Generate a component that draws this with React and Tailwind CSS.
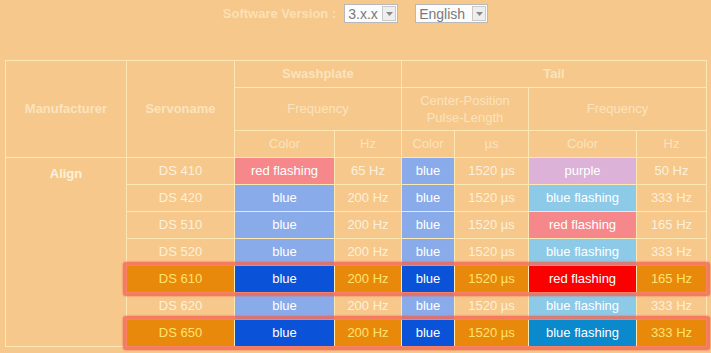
import React from 'react';

// cell colour classes, written out in full so Tailwind picks them up
const fills = {
  peach: 'bg-[#f6c88c] text-[#fdf0da]',
  lred: 'bg-[#f6878b] text-white',
  lblue: 'bg-[#8aabea] text-white',
  purple: 'bg-[#dcb2d8] text-white',
  sky: 'bg-[#8dcae8] text-white',
  hot: 'bg-[#e8890c] text-[#ffe46c]',
  dblue: 'bg-[#0a52d8] text-white',
  red: 'bg-[#fb0000] text-white',
  mblue: 'bg-[#0a89cd] text-white',
};

const rows = [
  { name: 'DS 410', sc: ['red flashing', 'lred'], hz: '65 Hz', tc: 'lblue', tf: ['purple', 'purple'], thz: '50 Hz' },
  { name: 'DS 420', sc: ['blue', 'lblue'], hz: '200 Hz', tc: 'lblue', tf: ['blue flashing', 'sky'], thz: '333 Hz' },
  { name: 'DS 510', sc: ['blue', 'lblue'], hz: '200 Hz', tc: 'lblue', tf: ['red flashing', 'lred'], thz: '165 Hz' },
  { name: 'DS 520', sc: ['blue', 'lblue'], hz: '200 Hz', tc: 'lblue', tf: ['blue flashing', 'sky'], thz: '333 Hz' },
  { name: 'DS 610', sc: ['blue', 'dblue'], hz: '200 Hz', tc: 'dblue', tf: ['red flashing', 'red'], thz: '165 Hz', hot: true },
  { name: 'DS 620', sc: ['blue', 'lblue'], hz: '200 Hz', tc: 'lblue', tf: ['blue flashing', 'sky'], thz: '333 Hz' },
  { name: 'DS 650', sc: ['blue', 'dblue'], hz: '200 Hz', tc: 'dblue', tf: ['blue flashing', 'mblue'], thz: '333 Hz', hot: true },
];

const rowStart = ['row-start-4', 'row-start-5', 'row-start-6', 'row-start-7', 'row-start-8', 'row-start-9', 'row-start-10'];

const Cell = ({ fill = 'peach', className = '', children }) => (
  <div className={`flex items-center justify-center text-center ${fills[fill]} ${className}`}>{children}</div>
);

const Head = ({ bold, className = '', children }) => (
  <div className={`flex items-center justify-center text-center bg-[#f6c88c] text-[#fbe3bd] ${bold ? 'font-bold' : ''} ${className}`}>
    {children}
  </div>
);

const FakeSelect = ({ value, width }) => (
  <div className={`flex items-center h-[19px] bg-[#fcfcfc] border border-[#b9b9b9] ${width}`}>
    <span className="flex-1 pl-[3px] text-[#7a7a7a] text-[14px] leading-none">{value}</span>
    <span className="flex items-center justify-center w-[14px] h-[15px] mr-px border border-[#c9c9c9] bg-[#eeeeee]">
      <svg width="7" height="4" viewBox="0 0 7 4"><path d="M0 0h7L3.5 4z" fill="#8a8a8a" /></svg>
    </span>
  </div>
);

export default function App() {
  return (
    <div className="w-[711px] h-[353px] overflow-hidden bg-[#f6c88c] text-[13px]" style={{ fontFamily: '"Liberation Sans", Arial, sans-serif' }}>
      <div className="flex items-center justify-center h-[27px]">
        <span className="font-bold text-[#fbe1b4] mr-[8px]">Software Version :</span>
        <FakeSelect value="3.x.x" width="w-[54px]" />
        <span className="w-[17px]" />
        <FakeSelect value="English" width="w-[73px]" />
      </div>

      <div className="mt-[33px] ml-[5px] w-[702px] grid gap-px p-px bg-[#fde8b4] grid-cols-[120px_107px_99px_66px_52px_73px_107px_69px] grid-rows-[26px_42px_26px_26px_26px_26px_26px_26px_26px_26px]">
        <Head bold className="col-start-1 row-start-1 row-span-3">Manufacturer</Head>
        <Head bold className="col-start-2 row-start-1 row-span-3">Servoname</Head>
        <Head bold className="col-start-3 row-start-1 col-span-2">Swashplate</Head>
        <Head bold className="col-start-5 row-start-1 col-span-4">Tail</Head>
        <Head className="col-start-3 row-start-2 col-span-2">Frequency</Head>
        <Head className="col-start-5 row-start-2 col-span-2 leading-[17px]">Center-Position<br />Pulse-Length</Head>
        <Head className="col-start-7 row-start-2 col-span-2">Frequency</Head>
        <Head className="col-start-3 row-start-3">Color</Head>
        <Head className="col-start-4 row-start-3">Hz</Head>
        <Head className="col-start-5 row-start-3">Color</Head>
        <Head className="col-start-6 row-start-3">µs</Head>
        <Head className="col-start-7 row-start-3">Color</Head>
        <Head className="col-start-8 row-start-3">Hz</Head>

        <div className="col-start-1 row-start-4 row-span-7 bg-[#f6c88c] text-[#fdf0da] font-bold text-center pt-[6px]">Align</div>

        {rows.map((r, i) => {
          const base = r.hot ? 'hot' : 'peach';
          return (
            <React.Fragment key={r.name}>
              <Cell fill={base} className={`col-start-2 ${rowStart[i]}`}>{r.name}</Cell>
              <Cell fill={r.sc[1]} className={`col-start-3 ${rowStart[i]}`}>{r.sc[0]}</Cell>
              <Cell fill={base} className={`col-start-4 ${rowStart[i]}`}>{r.hz}</Cell>
              <Cell fill={r.tc} className={`col-start-5 ${rowStart[i]}`}>blue</Cell>
              <Cell fill={base} className={`col-start-6 ${rowStart[i]}`}>1520 µs</Cell>
              <Cell fill={r.tf[1]} className={`col-start-7 ${rowStart[i]}`}>{r.tf[0]}</Cell>
              <Cell fill={base} className={`col-start-8 ${rowStart[i]}`}>{r.thz}</Cell>
              {r.hot && (
                <div className={`relative col-start-2 col-span-7 pointer-events-none ${rowStart[i]}`}>
                  <div className="absolute -inset-[4px] rounded-[3px] border-[4px] border-[#f3614f]/75 shadow-[0_0_2px_#f3614f]" />
                </div>
              )}
            </React.Fragment>
          );
        })}
      </div>
    </div>
  );
}
